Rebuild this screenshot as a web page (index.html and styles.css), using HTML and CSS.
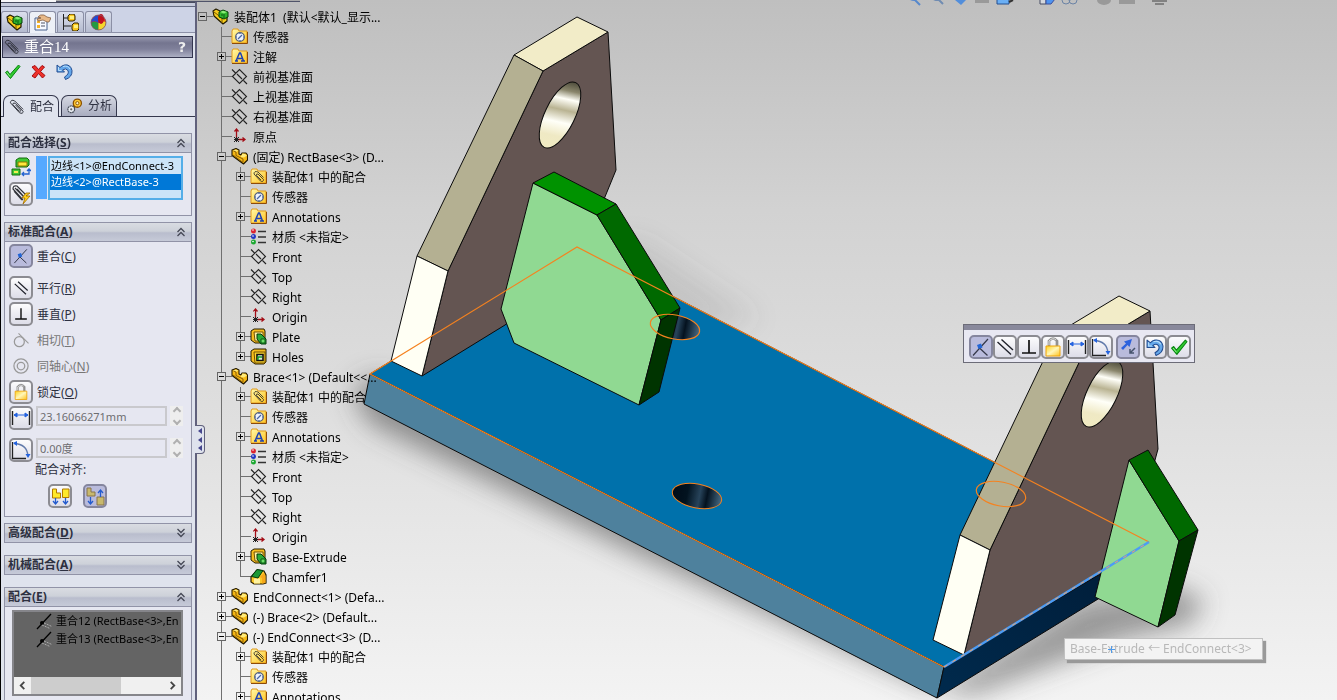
FILE: index.html
```html
<!DOCTYPE html>
<html lang="zh-CN">
<head>
<meta charset="utf-8">
<title>装配体1</title>
<link rel="stylesheet" href="styles.css">
</head>
<body>
<svg class="defs" aria-hidden="true">
  <defs>
    <linearGradient id="gold" x1="0" y1="0" x2="1" y2="1"><stop offset="0" stop-color="#fff9a8"/><stop offset="1" stop-color="#ffc526"/></linearGradient>
    <linearGradient id="lockg" x1="0" y1="0" x2="1" y2="1"><stop offset="0" stop-color="#ffd21c"/><stop offset=".5" stop-color="#fff6b8"/><stop offset="1" stop-color="#ffc21a"/></linearGradient>
    <linearGradient id="metal" x1=".45" y1="0" x2=".55" y2="1"><stop offset="0" stop-color="#4c4a3a"/><stop offset=".14" stop-color="#8a866c"/><stop offset=".26" stop-color="#fffff8"/><stop offset=".42" stop-color="#b9b392"/><stop offset=".6" stop-color="#fffff8"/><stop offset=".8" stop-color="#efe9c4"/><stop offset="1" stop-color="#f1ebc2"/></linearGradient>
    <linearGradient id="bore"><stop offset="0" stop-color="#000b18"/><stop offset=".3" stop-color="#021320"/><stop offset=".55" stop-color="#27435a"/><stop offset=".7" stop-color="#04121f"/><stop offset="1" stop-color="#466b85"/></linearGradient>
    <linearGradient id="edge" x1="0" y1="1" x2="1" y2="0"><stop offset="0" stop-color="#002a4d"/><stop offset="1" stop-color="#001b36"/></linearGradient>
    <filter id="soft" x="-20%" y="-20%" width="140%" height="140%"><feGaussianBlur stdDeviation="13"/></filter>
  </defs>
  <symbol id="folder" viewBox="0 0 17 17"><path d="M1 3l1-2h5l1 2h8v12H1z" fill="url(#gold)" stroke="#e09a1c"/><path d="M1 15.500h15.500V4" fill="none" stroke="#8e4b08"/></symbol>
  <symbol id="sensor" viewBox="0 0 17 17"><use href="#folder"/><circle cx="9" cy="9" r="4.300" fill="#eef3fb" stroke="#55627c" stroke-width="1.300"/><path d="M7 11l4-4M9 5v1M5 9h1M9 12v1M12 9h1" stroke="#4565a6" stroke-width="1.200"/></symbol>
  <symbol id="annot" viewBox="0 0 17 17"><use href="#folder"/><path d="M5 13l3.500-8h1l3 8M6.500 10.500h5M4 13h3M10 13h4" fill="none" stroke="#1c41b4" stroke-width="1.500"/></symbol>
  <symbol id="mates" viewBox="0 0 17 17"><use href="#folder"/><path d="M13.500 9.500L8 4Q4 2.500 4 6l6.500 7q3 1.500 3-1.500L8 6q-2-.5-1.500 1.500l4.500 4.500" fill="none" stroke="#3a372a" stroke-width=".9"/></symbol>
  <symbol id="plane" viewBox="0 0 17 17"><path d="M1.500 8.500l7-7 7 7-7 7zM1 1.500l3.500 3.500M12.500 12.500l3.500 3.500M6 6l5 5" fill="none" stroke="#222" stroke-width="1.100"/></symbol>
  <symbol id="origin" viewBox="0 0 17 17"><path d="M5.500 12V1M5.500 11.500H14M3.500 3.500l2-2.500 2 2.500M11.500 9.500l2.500 2-2.500 2" fill="none" stroke="#a30d16" stroke-width="1.300"/><path d="M3 9l5 5M8 9l-5 5M3 11.500h5M5.500 9v5" stroke="#222"/></symbol>
  <symbol id="part" viewBox="0 0 17 17"><path d="M1 2l4-1.500 3 1.500v4l2 1 1-2 4 0 1.500 2v5l-4 4L1 7.500z" fill="#f7b916" stroke="#211800" stroke-width="1.100" stroke-linejoin="round"/><path d="M2 2.500l3-1 2.500 1.200-2.500 1zM9.500 9l2-3.500 2.500.5L16 7.500l-3 2z" fill="#ffeb7a"/><path d="M2 7l10 7.500V11L5 7.500V4L2.500 3" fill="none" stroke="#7d5300" stroke-width=".9"/></symbol>
  <symbol id="asm" viewBox="0 0 17 17"><path d="M1 3l3-2 4 2 7 3v7l-4 3L2 8z" fill="#f5ca1a" stroke="#221b00" stroke-width="1.200" stroke-linejoin="round"/><path d="M2 4l8 6v5" fill="none" stroke="#785700"/><path d="M7 4l4-2 5 2v5l-4 2-5-2z" fill="#2eb22d" stroke="#043e08"/><path d="M8 4l3-1.300L15 4l-3 1.500z" fill="#8aed76"/><path d="M12 6v4M9 7h2" stroke="#075b10"/></symbol>
  <symbol id="mat" viewBox="0 0 17 17"><circle cx="3.500" cy="3" r="2.500" fill="#dc2430"/><circle cx="3.500" cy="8.500" r="2.500" fill="#2236c3"/><circle cx="3.500" cy="14" r="2.500" fill="#1ba830"/><path d="M8 3.500h8M8 9h8M8 14.500h8" stroke="#333" stroke-width="1.700"/><g fill="#fff"><circle cx="3" cy="2" r=".8"/><circle cx="3" cy="8" r=".8"/><circle cx="3" cy="13.500" r=".8"/></g></symbol>
  <symbol id="extrude" viewBox="0 0 17 17"><path d="M1 3l3-2h10l1 2v10l-2 2H5l-4-3z" fill="#f6bd1d" stroke="#241c00"/><path d="M4 4h9v9H5z" fill="#fff2a2" stroke="#725000"/><path d="M7 6h4l5 5v5h-5l-4-5z" fill="#2dab38" stroke="#043b0d"/><path d="M11 11h4v4h-4z" fill="#6cdf68" stroke="#075b10"/></symbol>
  <symbol id="hole" viewBox="0 0 17 17"><path d="M1 3l3-2h12v13l-2 2H5l-4-3z" fill="#f6bd1d" stroke="#241c00"/><path d="M4 4h11v11H5z" fill="#ffd72e" stroke="#725000"/><path d="M7 6.500h6v6H7z" fill="#ddebd5" stroke="#111" stroke-width="1.600"/><path d="M8 12V9h4" fill="none" stroke="#159b2c" stroke-width="1.500"/></symbol>
  <symbol id="chamfer" viewBox="0 0 17 17"><path d="M1 9l6-7 7 1 2 4v8l-3 1H4l-3-2z" fill="#fcc928" stroke="#251c00" stroke-width="1.200"/><path d="M10 9l4-4 1.500 3v7L12 15.500V10z" fill="#f6a81a"/><path d="M4 10.500h6v5H4z" fill="#fff3a0"/><path d="M1.500 8.500L7 1.500l6 1L8 10z" fill="#1b9935" stroke="#043b0d"/></symbol>
  <symbol id="clip" viewBox="0 0 17 17"><path d="M15 11L6 2Q2 0 1.500 4L11 14.500q4 2 4-1.500L6.500 4.500Q4 3.500 4 6l7 7q1.500.5 1.500-1L7 6.500" fill="none" stroke="#2c2e36" stroke-width="1"/></symbol>
  <symbol id="prop" viewBox="0 0 17 17"><path d="M1 4h12v12H1z" fill="#f7f9ff" stroke="#48608c"/><path d="M3 7h3v2H3zM3 11h3v3H3z" fill="#f4b429"/><path d="M7 9h4M7 12h4" stroke="#4e5364"/><path d="M4 3q2-3 6-2l3 2 4 1-2 4h-2L9 6 4 7l-1-2 4-1z" fill="#e8b988" stroke="#765036" stroke-width=".7"/></symbol>
  <symbol id="config" viewBox="0 0 17 17"><path d="M1.500 0v16M1 4h5M1 12h8" stroke="#222" fill="none"/><path d="M6 2l2-2h4l1 2v4l-2 1H7L6 6zM10 11l2-2h4l1 2v4l-2 2h-4l-1-2z" fill="#fbc51c" stroke="#312400"/><path d="M8 2h4v3H8zM12 11h4v3h-4z" fill="#fff079"/></symbol>
  <symbol id="ball" viewBox="0 0 17 17"><circle cx="8.500" cy="8.500" r="7.500" fill="#e22a22"/><path d="M1 9q3-3 7.500 0v7Q2 16 1 9z" fill="#239b41"/><path d="M8.500 9q4-3 7.500-.5-1 7.500-7.500 7.500z" fill="#f5d52c"/><path d="M8.500 1v8Q5 6 1 8.500 2 2 8.500 1z" fill="#254bd0"/><ellipse cx="11" cy="5" rx="3" ry="5" fill="#c01120"/><circle cx="8.500" cy="8.500" r="7.500" fill="none" stroke="#795d6b" stroke-width=".8"/></symbol>
  <symbol id="check" viewBox="0 0 17 17"><path d="M1.500 9.500l2-1.500L6 11.500 14.500 2l1.500 1.500L6.500 15.500z" fill="#31cb30" stroke="#078410" stroke-linejoin="round"/><path d="M3 9.500l3 4" stroke="#a4f59b" stroke-width=".8"/></symbol>
  <symbol id="cross" viewBox="0 0 17 17"><path d="M2 4l3-1.500 3.500 4L12 2.500 14.500 4l-4 4.500 4.500 4-2.500 2.500-4-4.500L5 15l-3-2 4-4.500z" fill="#ee3129" stroke="#a60b10"/></symbol>
  <symbol id="undo" viewBox="0 0 17 17"><path d="M1 2v7h7.500L6.500 7Q10 4.500 12 7.500q1.500 3.500-3.500 6.500l1 2.500Q16.500 14 16 7.500 14.500 1 8.500 2 6 2.500 4 4.500z" fill="#64a7ea" stroke="#234d91" stroke-linejoin="round"/><path d="M2.500 4v3.500h3M7 3.500Q12 2 14 6" fill="none" stroke="#b9dffb"/></symbol>
  <symbol id="gears" viewBox="0 0 17 17"><path d="M5 12l6-7" stroke="#3b2500" stroke-width="3"/><circle cx="11" cy="5.500" r="4.300" fill="#ffc933" stroke="#8a5100" stroke-width="1.400"/><circle cx="11" cy="5.500" r="1.700" fill="#fff3c4" stroke="#8a5100"/><circle cx="4.500" cy="12" r="3.600" fill="#e9edf3" stroke="#4b525e" stroke-width="1.300" stroke-dasharray="2 .5"/><circle cx="4.500" cy="12" r="1.200" fill="#666"/></symbol>
  <symbol id="coin" viewBox="0 0 24 24"><path d="M4 20.500L19 4M10 12.500l8.500 8" stroke="#353849" stroke-width="1.200"/><path d="M8 10l4-1.500 1.500 4-4 1.500z" fill="#2265d7"/></symbol>
  <symbol id="para" viewBox="0 0 24 24"><path d="M4.500 7L18 19.500M8.500 4.500L20 15" stroke="#20222b" stroke-width="1.400"/></symbol>
  <symbol id="perp" viewBox="0 0 24 24"><path d="M5 18h14M12 5v13" stroke="#111" stroke-width="1.700"/></symbol>
  <symbol id="tang" viewBox="0 0 24 24"><circle cx="10" cy="14" r="6" fill="none" stroke="#999" stroke-width="1.500"/><path d="M9 4l12 12" stroke="#999" stroke-width="1.300"/></symbol>
  <symbol id="conc" viewBox="0 0 24 24"><g fill="none" stroke="#999" stroke-width="1.500"><circle cx="12" cy="12" r="8.500"/><circle cx="12" cy="12" r="4.500"/></g></symbol>
  <symbol id="lock" viewBox="0 0 24 24"><path d="M8 11V6q4-5 8 0v5" fill="none" stroke="#919191" stroke-width="2.700"/><path d="M8 10V6q4-4 7-1" fill="none" stroke="#ddd"/><path d="M5 11h14v10H5z" fill="url(#lockg)" stroke="#eda40c"/></symbol>
  <symbol id="dist" viewBox="0 0 24 24"><path d="M3.500 5v14M20.500 5v14" stroke="#222" stroke-width="1.400"/><path d="M5 9h14M5 9l3-2v4zM19 9l-3-2v4z" stroke="#2463df" fill="#2463df"/></symbol>
  <symbol id="angle" viewBox="0 0 24 24"><path d="M3.500 4v16.500H17" fill="none" stroke="#222" stroke-width="1.300"/><path d="M5 5.500Q18 6 19 18" fill="none" stroke="#627bab" stroke-width="1.300"/><path d="M4 5l4-2v5zM16.500 16h5L19 20z" fill="#2463df"/></symbol>
  <symbol id="flip" viewBox="0 0 24 24"><path d="M5 13l5-4.500-2-2 8-2.500-2.500 8-2-2-4.500 5z" fill="#2d62dd"/><path d="M19 13l-5 5m0-4v4h4" fill="none" stroke="#46536c" stroke-width="1.500"/></symbol>
  <symbol id="aligned" viewBox="0 0 24 24"><path d="M4.500 5h4v4h4v5h-8zM14.500 5H21v8.500h-6.500z" fill="#ffe92a" stroke="#b17a00"/><path d="M7.500 14v6m-2.500-3l2.500 3 2.500-3M17.500 14v6M15 17l2.500 3 2.500-3" fill="none" stroke="#235bce" stroke-width="1.300"/></symbol>
  <symbol id="anti" viewBox="0 0 24 24"><path d="M4 4h4v4h4v4H4zM14 13h7v8h-7z" fill="#c8b96d" stroke="#88744d"/><path d="M7.500 13v7M5 17l2.500 3 2.500-3M17.500 13V6M15 9l2.500-3L20 9" fill="none" stroke="#235bce" stroke-width="1.300"/></symbol>
  <symbol id="up" viewBox="0 0 10 10"><path d="M1.500 5L5 1.500 8.500 5M1.500 9L5 5.500 8.500 9" fill="none" stroke="#454856" stroke-width="1.300"/></symbol>
  <symbol id="down" viewBox="0 0 10 10"><path d="M1.500 1L5 4.500 8.500 1M1.500 5L5 8.500 8.500 5" fill="none" stroke="#454856" stroke-width="1.300"/></symbol>
  <symbol id="mate" viewBox="0 0 17 17"><path d="M1 16L15 1" stroke="#000" stroke-width="1.300"/><circle cx="6" cy="10" r="2" fill="#000"/><path d="M8 10l8 3.500M6 12l8 3.500" stroke="#aaa" stroke-dasharray="2 1"/></symbol>
</svg>

<div class="app">
  <aside class="panel">
    <div class="topstrip"></div>
    <nav class="tabs">
      <button class="tab" aria-label="设计树"><svg><use href="#asm"/></svg></button>
      <button class="tab on" aria-label="属性"><svg><use href="#prop"/></svg></button>
      <button class="tab" aria-label="配置"><svg><use href="#config"/></svg></button>
      <button class="tab" aria-label="外观"><svg><use href="#ball"/></svg></button>
    </nav>
    <header class="title"><svg><use href="#clip"/></svg><h1>重合14</h1><button aria-label="帮助">?</button></header>
    <div class="actions">
      <button aria-label="确定"><svg><use href="#check"/></svg></button>
      <button aria-label="取消"><svg><use href="#cross"/></svg></button>
      <button aria-label="撤销"><svg><use href="#undo"/></svg></button>
    </div>
    <div class="subtabs">
      <button class="subtab on"><svg><use href="#clip"/></svg>配合</button>
      <button class="subtab"><svg><use href="#gears"/></svg>分析</button>
    </div>

    <div class="sections">
      <section class="group">
        <button class="head"><span>配合选择(<u>S</u>)</span><svg><use href="#up"/></svg></button>
        <div class="selection">
          <div class="selicons">
            <svg viewBox="0 0 20 20"><path d="M5 3l3-2h8l2 2v5l-2 2H5z" fill="#43c936" stroke="#126a0c"/><path d="M7 5h9v4H7z" fill="#ffe83d" stroke="#8d7400"/><path d="M1 12h8v6H1z" fill="#43c936" stroke="#126a0c"/><path d="M3 14h4v2H3z" fill="#f1ee52"/><path d="M11 17h7v-5M13 15l-2 2 2 2M16 14l2-2 2 2" fill="none" stroke="#2463cf" stroke-width="1.300"/></svg>
            <button class="tool" aria-label="多配合"><svg viewBox="0 0 24 24"><path d="M18 14L8 4Q4 3 4 7l10 11M15 15L8 7M6 6l10 10M5 9l8 9" fill="none" stroke="#33353b" stroke-width="1.200"/><path d="M17 11l-4 5h3l-2 6 7-8h-4l4-3z" fill="#ffd21c" stroke="#a26b00" stroke-width=".8"/></svg></button>
          </div>
          <div class="swatch"></div>
          <ul class="listbox" role="listbox" aria-label="要配合的实体">
            <li role="option">边线&lt;1&gt;@EndConnect-3</li>
            <li role="option" class="sel" aria-selected="true">边线&lt;2&gt;@RectBase-3</li>
          </ul>
        </div>
      </section>

      <section class="group">
        <button class="head"><span>标准配合(<u>A</u>)</span><svg><use href="#up"/></svg></button>
        <div class="standard">
          <button class="opt wide"><svg class="tool down"><use href="#coin"/></svg><span>重合(<u>C</u>)</span></button>
          <button class="opt"><svg class="tool"><use href="#para"/></svg><span>平行(<u>R</u>)</span></button>
          <button class="opt"><svg class="tool"><use href="#perp"/></svg><span>垂直(<u>P</u>)</span></button>
          <button class="opt off"><svg class="tool flat"><use href="#tang"/></svg><span>相切(<u>T</u>)</span></button>
          <button class="opt off"><svg class="tool flat"><use href="#conc"/></svg><span>同轴心(<u>N</u>)</span></button>
          <button class="opt"><svg class="tool"><use href="#lock"/></svg><span>锁定(<u>O</u>)</span></button>
          <div class="field wide"><button class="tool" aria-label="距离"><svg><use href="#dist"/></svg></button><input type="text" value="23.16066271mm" aria-label="距离值"><span class="spin"><button aria-label="增大距离"></button><button class="dn" aria-label="减小距离"></button></span></div>
          <div class="field"><button class="tool" aria-label="角度"><svg><use href="#angle"/></svg></button><input type="text" value="0.00度" aria-label="角度值"><span class="spin"><button aria-label="增大角度"></button><button class="dn" aria-label="减小角度"></button></span></div>
          <p class="alignlabel">配合对齐:</p>
          <div class="align"><button class="tool" aria-label="同向对齐"><svg><use href="#aligned"/></svg></button><button class="tool down" aria-label="反向对齐"><svg><use href="#anti"/></svg></button></div>
        </div>
      </section>

      <section class="group shut"><button class="head"><span>高级配合(<u>D</u>)</span><svg><use href="#down"/></svg></button></section>
      <section class="group shut"><button class="head"><span>机械配合(<u>A</u>)</span><svg><use href="#down"/></svg></button></section>

      <section class="group last">
        <button class="head"><span>配合(<u>E</u>)</span><svg><use href="#up"/></svg></button>
        <div class="matebox">
          <ul>
            <li><svg><use href="#mate"/></svg><span>重合12 (RectBase&lt;3&gt;,En</span></li>
            <li><svg><use href="#mate"/></svg><span>重合13 (RectBase&lt;3&gt;,En</span></li>
          </ul>
          <div class="hscroll"><button aria-label="向左"><svg viewBox="0 0 10 10"><path d="M7 1L3 5l4 4" fill="none" stroke="#444" stroke-width="2"/></svg></button><div class="track"><div class="thumb"></div></div><button aria-label="向右"><svg viewBox="0 0 10 10"><path d="M3 1l4 4-4 4" fill="none" stroke="#444" stroke-width="2"/></svg></button></div>
        </div>
      </section>
    </div>
  </aside>

  <main class="view">
    <ul class="tree">
      <li class="root"><div class="row"><button class="tog" aria-label="折叠"></button><svg><use href="#asm"/></svg><span>装配体1&nbsp; (默认&lt;默认_显示...</span></div>
        <ul>
          <li><div class="row leaf"><svg><use href="#sensor"/></svg><span>传感器</span></div></li>
          <li><div class="row"><button class="tog plus" aria-label="展开"></button><svg><use href="#annot"/></svg><span>注解</span></div></li>
          <li><div class="row leaf"><svg><use href="#plane"/></svg><span>前视基准面</span></div></li>
          <li><div class="row leaf"><svg><use href="#plane"/></svg><span>上视基准面</span></div></li>
          <li><div class="row leaf"><svg><use href="#plane"/></svg><span>右视基准面</span></div></li>
          <li><div class="row leaf"><svg><use href="#origin"/></svg><span>原点</span></div></li>
          <li><div class="row"><button class="tog" aria-label="折叠"></button><svg><use href="#part"/></svg><span>(固定) RectBase&lt;3&gt; (D...</span></div>
            <ul>
              <li><div class="row"><button class="tog plus" aria-label="展开"></button><svg><use href="#mates"/></svg><span>装配体1 中的配合</span></div></li>
              <li><div class="row leaf"><svg><use href="#sensor"/></svg><span>传感器</span></div></li>
              <li><div class="row"><button class="tog plus" aria-label="展开"></button><svg><use href="#annot"/></svg><span>Annotations</span></div></li>
              <li><div class="row leaf"><svg><use href="#mat"/></svg><span>材质 &lt;未指定&gt;</span></div></li>
              <li><div class="row leaf"><svg><use href="#plane"/></svg><span>Front</span></div></li>
              <li><div class="row leaf"><svg><use href="#plane"/></svg><span>Top</span></div></li>
              <li><div class="row leaf"><svg><use href="#plane"/></svg><span>Right</span></div></li>
              <li><div class="row leaf"><svg><use href="#origin"/></svg><span>Origin</span></div></li>
              <li><div class="row"><button class="tog plus" aria-label="展开"></button><svg><use href="#extrude"/></svg><span>Plate</span></div></li>
              <li class="end"><div class="row"><button class="tog plus" aria-label="展开"></button><svg><use href="#hole"/></svg><span>Holes</span></div></li>
            </ul>
          </li>
          <li><div class="row"><button class="tog" aria-label="折叠"></button><svg><use href="#part"/></svg><span>Brace&lt;1&gt; (Default&lt;&lt;...</span></div>
            <ul>
              <li><div class="row"><button class="tog plus" aria-label="展开"></button><svg><use href="#mates"/></svg><span>装配体1 中的配合</span></div></li>
              <li><div class="row leaf"><svg><use href="#sensor"/></svg><span>传感器</span></div></li>
              <li><div class="row"><button class="tog plus" aria-label="展开"></button><svg><use href="#annot"/></svg><span>Annotations</span></div></li>
              <li><div class="row leaf"><svg><use href="#mat"/></svg><span>材质 &lt;未指定&gt;</span></div></li>
              <li><div class="row leaf"><svg><use href="#plane"/></svg><span>Front</span></div></li>
              <li><div class="row leaf"><svg><use href="#plane"/></svg><span>Top</span></div></li>
              <li><div class="row leaf"><svg><use href="#plane"/></svg><span>Right</span></div></li>
              <li><div class="row leaf"><svg><use href="#origin"/></svg><span>Origin</span></div></li>
              <li><div class="row"><button class="tog plus" aria-label="展开"></button><svg><use href="#extrude"/></svg><span>Base-Extrude</span></div></li>
              <li class="end"><div class="row leaf"><svg><use href="#chamfer"/></svg><span>Chamfer1</span></div></li>
            </ul>
          </li>
          <li><div class="row"><button class="tog plus" aria-label="展开"></button><svg><use href="#part"/></svg><span>EndConnect&lt;1&gt; (Defa...</span></div></li>
          <li><div class="row"><button class="tog plus" aria-label="展开"></button><svg><use href="#part"/></svg><span>(-) Brace&lt;2&gt; (Default...</span></div></li>
          <li><div class="row"><button class="tog" aria-label="折叠"></button><svg><use href="#part"/></svg><span>(-) EndConnect&lt;3&gt; (D...</span></div>
            <ul>
              <li><div class="row"><button class="tog plus" aria-label="展开"></button><svg><use href="#mates"/></svg><span>装配体1 中的配合</span></div></li>
              <li><div class="row leaf"><svg><use href="#sensor"/></svg><span>传感器</span></div></li>
              <li><div class="row"><button class="tog plus" aria-label="展开"></button><svg><use href="#annot"/></svg><span>Annotations</span></div></li>
            </ul>
          </li>
        </ul>
      </li>
    </ul>
  </main>

  <svg class="scene" viewBox="0 0 1337 700" preserveAspectRatio="xMinYMin meet" aria-label="三维模型">
    <g filter="url(#soft)" fill="#555">
      <path d="M352 392L375 376 560 440 940 668 936 690 640 556 460 468 370 424z" opacity=".6"/>
      <path d="M940 690L1080 600 1170 585 1205 600 1190 625 1120 640 970 696z" opacity=".55"/>
      <path d="M560 250L640 240 760 320 690 330z" opacity=".15"/>
    </g>
    <g stroke="#0a0a0a" stroke-linejoin="round">
      <path d="M370 374L577 247 1149 542 944 667z" fill="#0071ab"/>
      <path d="M370 374L944 667 937 698 364 404z" fill="#4e819d"/>
      <path d="M944 667L1149 542 1142 572 937 698z" fill="url(#edge)"/>
      <ellipse cx="675" cy="327" rx="25" ry="12" transform="rotate(11 675 327)" fill="url(#bore)" stroke="none"/>
      <ellipse cx="697" cy="496" rx="25" ry="12" transform="rotate(11 697 496)" fill="url(#bore)" stroke="#f5821f"/>
      <path d="M543 71L608 32 616 170 575 270 505 325 422 376 448 271z" fill="#645552"/>
      <path d="M514 55L577 17 608 32 543 71z" fill="#f2ecc8"/>
      <path d="M514 55L543 71 448 271 417 256z" fill="#b4b092"/>
      <path d="M417 256L448 271 422 376 391 361z" fill="#fffff4"/>
      <ellipse cx="560" cy="115" rx="15" ry="36" transform="rotate(26 560 115)" fill="url(#metal)"/>
      <path d="M533 183L597 215 661 320 639 405 514 343 501 309z" fill="#90d992"/>
      <path d="M533 183L554 172 616 204 597 215z" fill="#009200"/>
      <path d="M597 215L616 204 680 308 661 320z" fill="#006900"/>
      <path d="M661 320L680 308 659 392 639 405z" fill="#003400"/>
      <path d="M1085 350L1150 311 1158 449 1128 560 1095 577 964 655 990 550z" fill="#645552"/>
      <path d="M1056 334L1119 296 1150 311 1085 350z" fill="#f2ecc8"/>
      <path d="M1056 334L1085 350 990 550 960 535z" fill="#b4b092"/>
      <path d="M960 535L990 550 964 655 933 640z" fill="#fffff4"/>
      <ellipse cx="1102" cy="394" rx="15" ry="36" transform="rotate(26 1102 394)" fill="url(#metal)"/>
      <path d="M1129 460L1179 541 1158 627 1095 597z" fill="#90d992"/>
      <path d="M1129 460L1148 450 1198 530 1179 541z" fill="#006900"/>
      <path d="M1179 541L1198 530 1175 615 1158 627z" fill="#003400"/>
    </g>
    <g fill="none" stroke="#f5821f" stroke-width="1.200">
      <path d="M944 667L370 374 577 247 1149 542"/>
      <ellipse cx="675" cy="327" rx="25" ry="12" transform="rotate(11 675 327)"/>
      <ellipse cx="1001" cy="494" rx="25" ry="12" transform="rotate(11 1001 494)"/>
    </g>
    <path d="M944 667L1149 542" stroke="#4b9cf5" stroke-width="2.500"/><path d="M944 667L1149 542" stroke="#f3a365" stroke-width="1" stroke-dasharray="4 6"/>
    <g transform="translate(905)" fill="none">
      <path d="M3-4a7 6 0 0 0 7 4M10 0l5 5" stroke="#5688cc" stroke-width="2"/><path d="M26-4a7 6 0 0 0 8 4M34 0l4 4" stroke="#708cb2" stroke-width="2"/>
      <path d="M50 0l6 5 5-5z" fill="#528edb"/><path d="M70 0h14v3H70z" fill="#999"/><path d="M92-1h12v5H92z" fill="#6aaff5" stroke="#234e91"/><path d="M104 2l4-2" stroke="#333" stroke-width="2"/>
      <path d="M135-1h6v5h-6z" fill="#d5d8dd" stroke="#444b63"/><path d="M141-1h9l-4 5h-5z" fill="#4e93f0" stroke="#3b4f9c"/><circle cx="161" r="4" stroke="#6b83a5"/><circle cx="168" r="4" stroke="#6b83a5"/><path d="M192 0a7 5 0 0 0 14 0z" fill="#999"/><path d="M214 0h16v4h-16z" fill="#999"/><path d="M247 1h15M250 4h9" stroke="#444"/>
    </g>
  </svg>
  <div class="topedge"></div>
  <button class="splitter" aria-label="折叠面板"><i></i><i></i><i></i></button>

  <div class="popup">
    <div class="grip"></div>
    <div class="bar">
      <button class="tool down" aria-label="重合"><svg><use href="#coin"/></svg></button>
      <button class="tool" aria-label="平行"><svg><use href="#para"/></svg></button>
      <button class="tool" aria-label="垂直"><svg><use href="#perp"/></svg></button>
      <button class="tool" aria-label="锁定"><svg><use href="#lock"/></svg></button>
      <button class="tool" aria-label="距离"><svg><use href="#dist"/></svg></button>
      <button class="tool" aria-label="角度"><svg><use href="#angle"/></svg></button>
      <button class="tool down gap" aria-label="反转"><svg><use href="#flip"/></svg></button>
      <button class="tool gap small" aria-label="撤销"><svg><use href="#undo"/></svg></button>
      <button class="tool small" aria-label="确定"><svg><use href="#check"/></svg></button>
    </div>
  </div>
  <div class="tip">Base-Extrude ← EndConnect&lt;3&gt;<svg viewBox="0 0 7 7"><path d="M3.500 0v7M0 3.500h7" stroke="#4f9bea"/></svg></div>
</div>
</body>
</html>
```

FILE: styles.css
```css
* { box-sizing: border-box; }
:root { --sky: linear-gradient(#bfbfbf, #d2d2d2 30%, #dfdfdf 60%, #f3f3f3); }
body { margin: 0; font: 12px/16px "Noto Sans", "Noto Sans CJK SC", sans-serif; color: #111; }
button { margin: 0; padding: 0; border: 0; background: none; font: inherit; color: inherit; }
ul { list-style: none; margin: 0; padding: 0; }
svg { display: block; flex: none; }
.defs { position: absolute; width: 0; height: 0; }
.app { position: relative; display: flex; height: 100vh; overflow: hidden; background: var(--sky) fixed; }

.panel { position: relative; z-index: 3; flex: none; width: 197px; display: flex; flex-direction: column; background: #dfe3ed; border-left: 1px solid #000; border-right: 2px solid #60617c; color: #2d3040; }
.topstrip { height: 7px; background: linear-gradient(#f7f7f9 0 2px, #474b5e 2px 3px, #c5cada 3px 6px, #656b82 6px); }
.tabs { display: flex; gap: 1px; height: 26px; padding-top: 4px; background: #cdd3e6; border-bottom: 1px solid #8d91a8; }
.tab { display: grid; place-items: center; width: 27px; height: 21px; border: 1px solid #8b8fa5; border-bottom: 0; border-radius: 3px 3px 0 0; background: linear-gradient(#dadeec, #b5bbcf); }
.tab.on { height: 22px; background: #edf0f7; }
.tab svg { width: 17px; height: 17px; }
.title { display: flex; align-items: center; height: 22px; margin: 3px 2px 0 1px; padding: 0 6px 0 1px; gap: 4px; border: 1px solid #34364f; background: linear-gradient(#9697ae, #74758f 30%, #7f809a 60%, #acafc3); }
.title svg { width: 16px; height: 16px; }
.title h1 { flex: 1; margin: 0; font: 15px/20px "Liberation Serif", "Noto Sans CJK SC", serif; color: #fff; }
.title button { font: bold 14px/18px "DejaVu Sans", sans-serif; color: #eee; }
.actions { display: flex; align-items: flex-start; gap: 9px; height: 37px; padding: 5px 3px; }
.actions svg { width: 17px; height: 17px; }
.subtabs { display: flex; gap: 2px; height: 22px; padding-left: 2px; border-bottom: 1px solid #35384d; }
.subtab { display: flex; align-items: center; gap: 5px; width: 56px; padding-left: 5px; border: 1px solid #35384d; border-bottom: 0; border-radius: 7px 7px 0 0; background: linear-gradient(#d5d8e2, #a9adc0); }
.subtab.on { height: 22px; background: #dfe3ed; }
.subtab svg { width: 16px; height: 16px; }
.sections { flex: 1; display: flex; flex-direction: column; padding: 16px 3px 0 3px; min-height: 0; }
.group { flex: none; margin-bottom: 6px; border: 1px solid #9193a7; background: #e6e7f1; }
.group.shut { margin-bottom: 12px; }
.group.last { flex: 1; margin: 0; border-bottom: 0; }
.head { display: flex; justify-content: space-between; align-items: center; width: 100%; height: 19px; padding: 0 5px 0 3px; border-bottom: 1px solid #9193a7; background: linear-gradient(#d9dce2, #cdd1d9 45%, #b9bdcd 55%, #c6cad8); font-weight: bold; }
.shut .head { border-bottom: 0; height: 18px; }
.head svg { width: 10px; height: 10px; }
.tool { display: grid; place-items: center; flex: none; width: 24px; height: 24px; border: 2px solid #8c8c92; border-radius: 5px; background: linear-gradient(#fcfcfd, #dddde8); }
.tool svg { width: 24px; height: 24px; margin: -2px; }
.tool.down { background: #b9bbdc; border-color: #85869e; }
.tool.flat { border-color: transparent; background: none; }
svg.tool { display: block; overflow: visible; }
.selection { display: flex; height: 62px; padding: 3px 8px 0 4px; }
.selicons { display: grid; gap: 5px; align-content: start; justify-items: start; width: 27px; padding-top: 1px; }
.selicons > svg { width: 20px; height: 20px; margin-left: 2px; }
.swatch { width: 11px; height: 43px; background: #56a9ff; margin-right: 1px; }
.listbox { flex: 1; height: 44px; border: 2px solid #55aee8; background: #cce4f8; color: #000; white-space: nowrap; overflow: hidden; font-size: 11px; }
.listbox li { height: 16px; padding-left: 1px; }
.listbox .sel { background: #0078d7; color: #fff; }
.standard { display: grid; grid-template-columns: minmax(0, 1fr); gap: 2px; padding: 2px 8px 8px 4px; }
.opt { display: flex; align-items: center; gap: 4px; height: 24px; }
.opt span { padding-top: 2px; }
.wide { margin-bottom: 6px; }
.off { color: #777; }
.field { display: flex; gap: 3px; height: 24px; }
.field input { flex: 1; min-width: 0; height: 20px; padding: 0 2px; border: 2px solid #c9c9cd; background: #e6e7f1; color: #6d6d70; font: 11px/16px "Noto Sans", "Noto Sans CJK SC", sans-serif; }
.spin { display: grid; flex: none; place-items: center; width: 13px; height: 20px; background: #eee; }
.spin button { width: 6px; height: 6px; border: solid #b0b0b0; border-width: 2px 0 0 2px; transform: rotate(45deg); }
.spin .dn { transform: rotate(225deg); }
.alignlabel { height: 17px; margin: -3px 0 0 26px; line-height: 17px; }
.align { display: flex; gap: 11px; padding: 4px 0 0 39px; }
.matebox { display: flex; flex-direction: column; height: 86px; margin: 3px 8px 0 7px; border: 2px solid #85858a; background: #646464; color: #000; overflow: hidden; }
.matebox ul { flex: 1; padding-left: 22px; }
.matebox li { display: flex; gap: 3px; height: 18px; align-items: center; white-space: nowrap; font-size: 11px; }
.matebox li svg { width: 17px; height: 17px; }
.hscroll { display: flex; height: 17px; background: #f0f0f0; }
.hscroll button { display: grid; place-items: center; width: 17px; }
.hscroll svg { width: 9px; height: 9px; }
.track { flex: 1; }
.thumb { width: 68%; height: 100%; background: #cdcdcd; }

.view { position: relative; z-index: 2; flex: 1; padding: 7px 0 0 1px; min-width: 0; }
.tree { font-size: 12px; color: #000; white-space: nowrap; }
.tree ul { padding-left: 19px; }
.tree li { background: linear-gradient(#707070, #707070) 4px 0 / 1px 100% no-repeat; }
.tree li.root { background: none; }
.tree li.end { background-size: 1px 10px; }
.row { display: flex; align-items: center; height: 20px; background: linear-gradient(#707070, #707070) 4px 9px / 11px 1px no-repeat; }
.row svg { width: 17px; height: 17px; margin: -2px 4px 0 -1px; }
.row span { padding: 2px 0 0 1px; }
.leaf { padding-left: 15px; }
.tog { width: 9px; height: 9px; margin: -1px 6px 0 0; border: 1px solid #666; background: linear-gradient(#000, #000) center / 5px 1px no-repeat, var(--sky) fixed; }
.tog.plus { background: linear-gradient(#000, #000) center / 5px 1px no-repeat, linear-gradient(#000, #000) center / 1px 5px no-repeat, var(--sky) fixed; }

.scene { position: absolute; z-index: 1; left: 0; top: 0; width: 100%; height: 100%; }
.topedge { position: absolute; z-index: 4; left: 56px; top: 0; width: 244px; height: 2px; background: linear-gradient(#aaa 1px, #50546a 1px); }
.splitter { position: absolute; z-index: 4; left: 195px; top: 425px; display: grid; align-content: space-evenly; justify-content: center; width: 10px; height: 29px; border: 1px solid #60617c; border-left: 0; border-radius: 0 4px 4px 0; background: #dfe3ed; }
.splitter i { border: solid transparent; border-width: 3px 4px 3px 0; border-right-color: #45468c; }
.popup { position: absolute; z-index: 4; left: 963px; top: 324px; border: 1px solid #6c6c78; background: #e8e8f2; }
.grip { height: 5px; background: #88889b; }
.bar { display: flex; padding: 5px 3px 3px 5px; }
.bar .gap { margin-left: 3px; }
.bar .small svg { width: 18px; height: 18px; margin: 0; }
.tip { position: absolute; z-index: 4; left: 1064px; top: 638px; height: 22px; padding: 1px 10px 0 5px; border: 1px solid #c0c0c0; background: #f3f3f3; color: #b8b8b8; line-height: 18px; box-shadow: 3px 3px 1px #999; white-space: nowrap; font-size: 12px; }
.tip svg { position: absolute; left: 43px; top: 7px; width: 7px; height: 7px; }
```
